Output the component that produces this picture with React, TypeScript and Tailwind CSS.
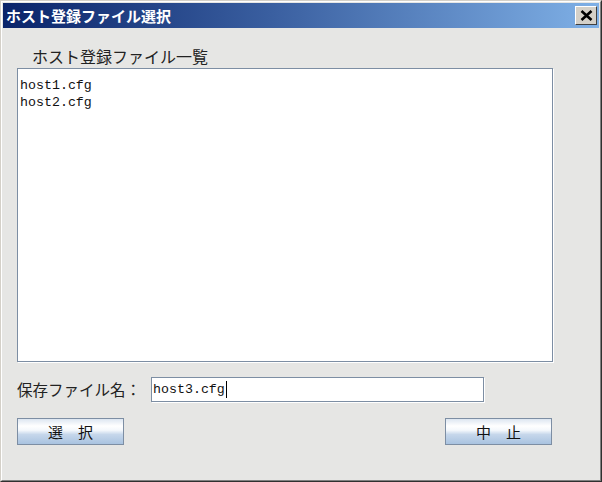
import React from "react";

const jp = '"Noto Sans CJK JP", "Noto Sans", sans-serif';
const mono = '"Liberation Mono", "Noto Sans CJK JP", monospace';

function Btn({ label }: { label: string }) {
  return (
    <div
      className="w-[107px] h-[27px] border border-[#7d8ea3] flex items-center justify-center text-[15px] text-[#111] leading-none"
      style={{
        fontFamily: jp,
        background:
          "linear-gradient(to bottom, #dde6f1 0%, #ffffff 28%, #f4f8fc 45%, #c6d7eb 62%, #a9c3e0 100%)",
      }}
    >
      <span>{label}</span>
    </div>
  );
}

export default function App() {
  return (
    <div className="w-[602px] h-[482px] bg-[#e6e6e4]">
      <div className="w-full h-full border-t border-l border-t-[#d4d0c8] border-l-[#d4d0c8] border-r border-b border-r-[#303030] border-b-[#303030]">
        <div className="w-full h-full border-t border-l border-t-white border-l-white border-r border-b border-r-[#808080] border-b-[#808080] p-px flex flex-col">
          {/* Title bar */}
          <div
            className="h-[25px] flex items-center justify-between pl-[3px] pr-[2px]"
            style={{ background: "linear-gradient(to right, #0a246a 0%, #3a5fa0 45%, #7fb0e6 100%)" }}
          >
            <span
              className="text-white font-bold text-[15px] leading-none"
              style={{ fontFamily: jp }}
            >
              ホスト登録ファイル選択
            </span>
            <div className="w-[22px] h-[19px] bg-[#d4d0c8] border-t border-l border-t-white border-l-white border-r border-b border-r-[#404040] border-b-[#404040] flex items-center justify-center">
              <svg width="13" height="11" viewBox="0 0 13 11">
                <path d="M1.5 1 L11.5 10 M11.5 1 L1.5 10" stroke="#000" strokeWidth="2.6" />
              </svg>
            </div>
          </div>

          {/* Body */}
          <div className="flex-1 flex flex-col pl-[14px] pr-[45px] pt-[20px]">
            <div
              className="h-[16px] pl-[15px] text-[16px] leading-[16px] text-[#222]"
              style={{ fontFamily: jp }}
            >
              ホスト登録ファイル一覧
            </div>
            <div className="mt-[4px] w-[536px] h-[294px] bg-white border border-[#7d8ea3] shadow-[1px_1px_0_#ffffff] pl-[2px] pt-[8px]">
              <div className="text-[13.3px] leading-[17px] text-[#111]" style={{ fontFamily: mono }}>
                host1.cfg
              </div>
              <div className="text-[13.3px] leading-[17px] text-[#111]" style={{ fontFamily: mono }}>
                host2.cfg
              </div>
            </div>

            <div className="mt-[15px] flex items-center h-[25px]">
              <span className="w-[134px] text-[15.5px] leading-none text-[#222]" style={{ fontFamily: jp }}>
                保存ファイル名：
              </span>
              <div className="w-[333px] h-[25px] bg-white border border-[#7d8ea3] shadow-[1px_1px_0_#ffffff] flex items-center pl-[1px]">
                <span className="text-[13.3px] leading-none text-[#111]" style={{ fontFamily: mono }}>
                  host3.cfg
                </span>
                <span className="w-px h-[17px] bg-black ml-[1px]" />
              </div>
            </div>

            <div className="mt-[16px] flex justify-between w-[535px]">
              <Btn label="選　択" />
              <Btn label="中　止" />
            </div>
          </div>
        </div>
      </div>
    </div>
  );
}
